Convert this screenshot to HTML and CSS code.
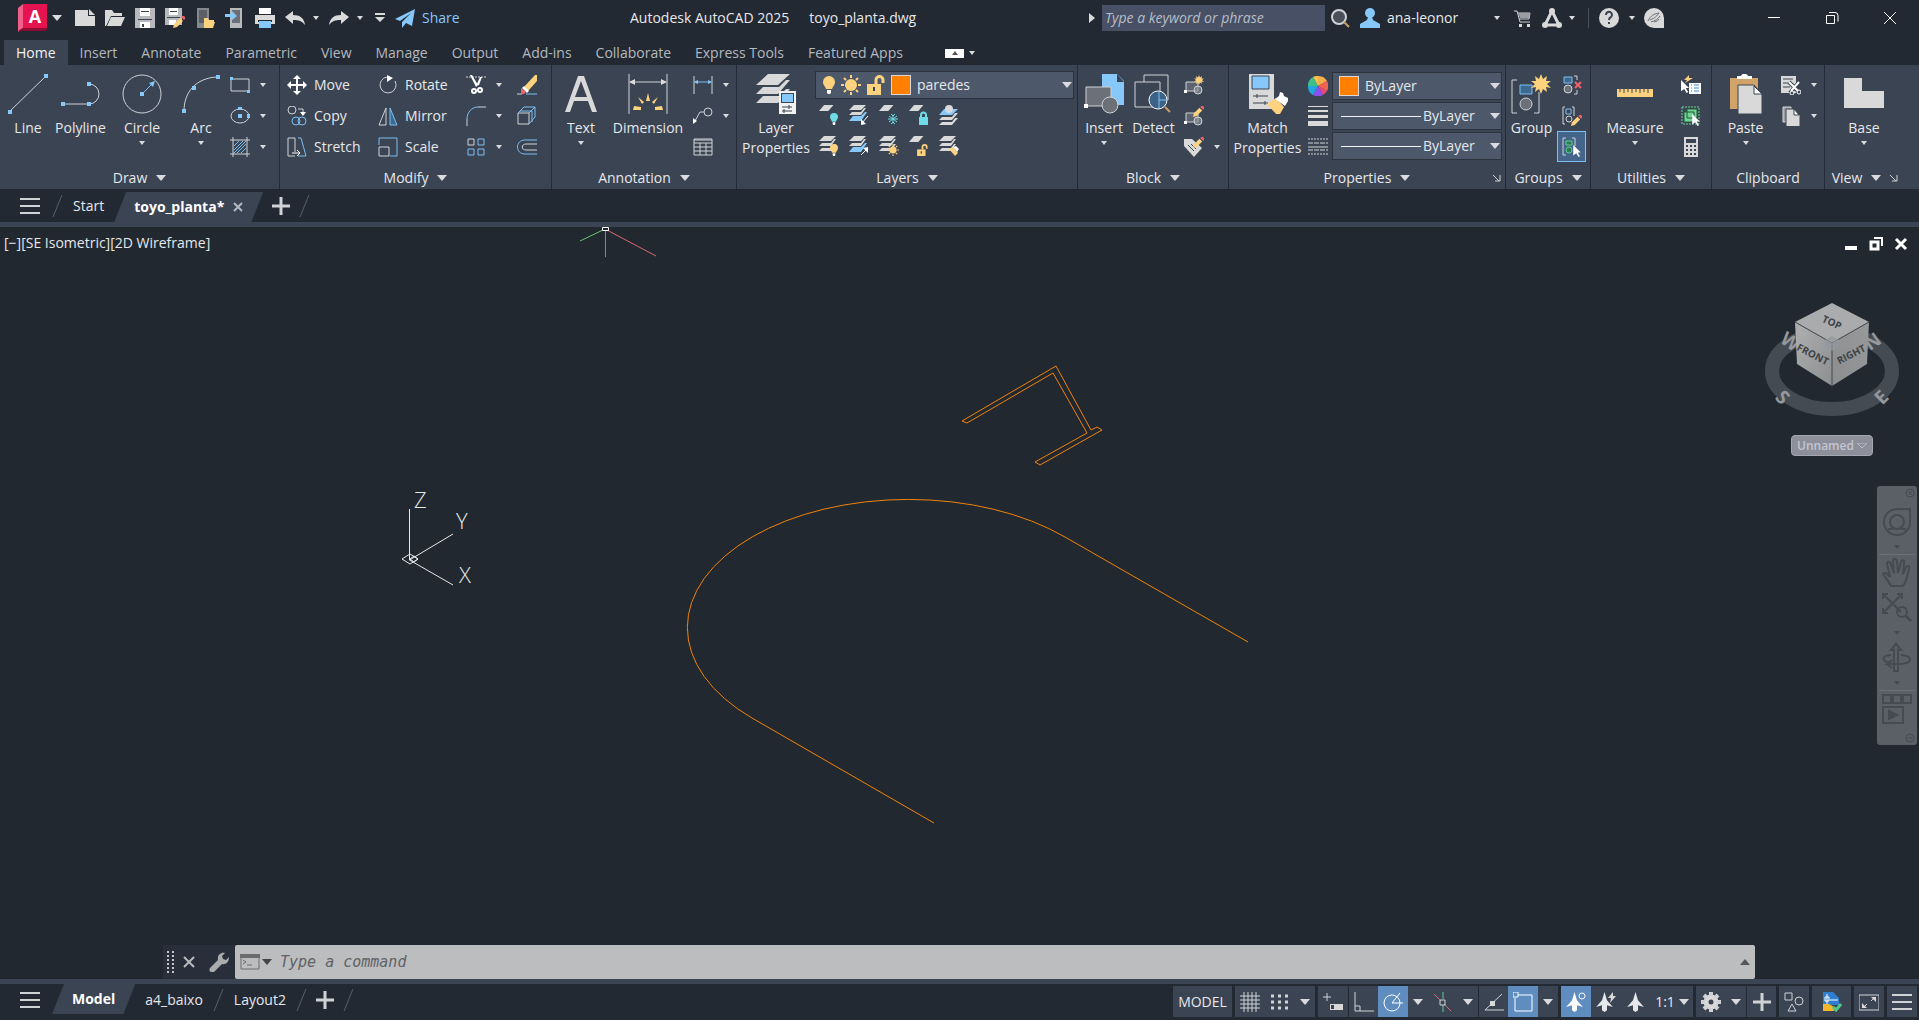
FILE: index.html
```html
<!doctype html>
<html lang="en">
    <head>
        <meta charset="utf-8">
        <title>Autodesk AutoCAD 2025 - toyo_planta.dwg</title>
        <meta name="viewport" content="width=device-width, initial-scale=1">
        <link rel="stylesheet" href="styles.css">
    </head>
    <body>
        <!-- Shapes shared by several icons -->
        <svg class="sprite" aria-hidden="true">
            <symbol id="sheet" viewBox="0 0 20 20"><path class="fg" d="M6 0h11l-6 7H0z"/></symbol>
            <symbol id="stack" viewBox="0 0 20 20"><path class="fg" d="M5 0h12l-5 5H0zM0 10l3-3h9l3-4h2l-5 7zM0 15l3-3h9l3-4h2l-5 7z"/></symbol>
            <symbol id="stack-blue" viewBox="0 0 20 20"><path class="fg" d="M5 0h12l-5 5H0zM0 10l3-3h9l3-4h2l-5 7z"/><path class="fb" d="M0 16l4-5h8l4-4h2l-6 9z"/></symbol>
            <symbol id="bulb" viewBox="0 0 12 18"><path fill="currentColor" d="M6 0a6 6 0 0 1 6 6c0 3-2 4-3 7H3C2 10 0 9 0 6a6 6 0 0 1 6-6z"/><path fill="#fff" d="M4 14h4v3l-1 1H5l-1-1z"/></symbol>
            <symbol id="sun" viewBox="0 0 20 20"><circle class="fy" cx="10" cy="10" r="6"/><path class="y" stroke-width="2" d="M10 0v3M10 17v3M0 10h3M17 10h3M3 3l2 2M15 15l2 2M3 17l2-2M15 5l2-2"/></symbol>
            <symbol id="unlock" viewBox="0 0 18 20"><path fill="none" stroke="currentColor" stroke-width="3" d="M9 9V5a3 3 0 0 1 7 0v3"/><path fill="currentColor" d="M0 9h14v11H0z"/><path fill="#3b4453" d="M6 12h2v4H6z"/></symbol>
            <symbol id="pencil" viewBox="0 0 12 12"><path class="fy" d="M1 8l6-6 3 3-6 6-4 1z"/><path fill="#f0626b" d="M8 1l1-1h2l1 1v2l-1 1z"/></symbol>
            <symbol id="star" viewBox="0 0 20 20"><path class="fy" d="M10 0l2 5 4-3-1 5 5 0-4 3 4 4-5-1 1 5-4-3-2 5-2-5-4 3 1-5-5 1 4-4-4-3 5 0-1-5 4 3z"/></symbol>
            <symbol id="block" viewBox="0 0 20 20"><path class="g" fill="#5d6470" stroke-width="1" d="M2 7h12v9H2z"/><circle class="g" fill="#8b9098" fill-opacity=".7" cx="14" cy="15" r="4"/><path fill="#fff" d="M0 15h3v3H0z"/></symbol>
            <symbol id="pointer" viewBox="0 0 10 16"><path fill="#fff" d="M0 0l10 10H6l3 5-2 1-3-5-4 3z"/></symbol>
            <symbol id="menu" viewBox="0 0 20 16"><path class="g" stroke-width="2" d="M0 1h20M0 8h20M0 15h20"/></symbol>
            <symbol id="plus" viewBox="0 0 18 18"><path class="g" stroke-width="3" d="M9 0v18M0 9h18"/></symbol>
            <symbol id="launch" viewBox="0 0 8 8"><path class="g" d="M0 1l6 6M7 1v6H2"/></symbol>
            <symbol id="person" viewBox="0 0 20 24"><path fill="currentColor" d="M10 0l3 10 7 8-7-2v6l-3 2-3-2v-6l-7 2 7-8z"/></symbol>
        </svg>

        <header class="titlebar">
            <div class="quick">
                <button class="app" aria-label="Application menu">
                    <svg width="30" height="28" viewBox="0 0 30 28"><path fill="#f0608a" d="M0 4l5-4v24l-5 4z"/><path fill="#e5134f" d="M5 0h24v24H5z"/><path fill="#8e0c31" d="M5 24h24l-1 3H0z"/><text x="17" y="19" text-anchor="middle" class="logo-letter">A</text></svg>
                    <span class="caret big"></span>
                </button>
                <button aria-label="New"><svg class="i20" viewBox="0 0 20 20"><path class="fg" d="M0 2h13v6h7v10H0z"/><path class="fg" d="M14 1l6 6h-6z"/></svg></button>
                <button aria-label="Open"><svg class="i20" viewBox="0 0 20 20"><path class="fg" d="M0 18V2h7l2 3h8v3H6L1 18z"/><path class="fg" d="M6 9h14l-4 9H2z"/></svg></button>
                <button aria-label="Save"><svg class="i20" viewBox="0 0 20 20"><path fill="#b7b9bc" d="M0 0h20v20H0z"/><path fill="#fff" d="M5 0h10v8H5zM5 14h10v6H5z"/><path fill="#3b4453" d="M6 3h8v1H6zM7 16h2v3H7zM3 11h14v1H3z"/></svg></button>
                <button aria-label="Save as"><svg class="i20" viewBox="0 0 20 20"><path fill="#b7b9bc" d="M0 0h17v17H0z"/><path fill="#fff" d="M4 0h9v7H4zM4 12h7v5H4z"/><path fill="#3b4453" d="M5 3h7v1H5zM2 9h13v1H2z"/><use href="#pencil" x="8" y="8" width="12" height="12"/></svg></button>
                <button aria-label="Open from web"><svg class="i20" viewBox="0 0 20 20"><path fill="#85888c" d="M2 0h12v20H2z"/><path fill="#5c6066" d="M4 2h8v13H4z"/><path class="fy" d="M9 20V10h4l1 2h5v2h1l-2 6z"/></svg></button>
                <button aria-label="Save to web"><svg class="i20" viewBox="0 0 20 20"><path fill="#b7b9bc" d="M5 0h12v20H5z"/><path fill="#6b6f75" d="M7 2h8v13H7z"/><path class="fb" d="M0 6h6V2l6 6-6 5V9H0z"/></svg></button>
                <button aria-label="Plot"><svg class="i20" viewBox="0 0 20 20"><path fill="#fff" d="M4 0h12v6H4z"/><path class="fg" d="M0 7h20v9H0z"/><path fill="#222933" d="M3 12h14v2H3z"/><path class="fb" d="M4 13h12v7H4z"/></svg></button>
                <button class="wide" aria-label="Undo"><svg class="i20" viewBox="0 0 20 20"><path class="fg" d="M0 9l8-6v4c7 0 11 3 12 10-3-4-6-5-12-5v4z"/></svg><span class="caret"></span></button>
                <button class="wide" aria-label="Redo"><svg class="i20" viewBox="0 0 20 20"><path class="fg" d="M20 9l-8-6v4C5 7 1 10 0 17c3-4 6-5 12-5v4z"/></svg><span class="caret"></span></button>
                <button class="customize" aria-label="Customize"><svg width="12" height="10" viewBox="0 0 12 10"><path class="fg" d="M1 0h10v2H1zM1 4h10l-5 5z"/></svg></button>
                <button class="share"><svg class="i20" viewBox="0 0 20 20"><path class="fb" d="M20 1L0 11l5 2L16 5 7 14v6l4-5 6 3z"/></svg>Share</button>
            </div>
            <h1 class="doc-title"><span>Autodesk AutoCAD 2025</span><span>toyo_planta.dwg</span></h1>
            <div class="account">
                <svg width="6" height="10" viewBox="0 0 6 10"><path class="fg" d="M0 0l6 5-6 5z"/></svg>
                <input class="search" type="search" placeholder="Type a keyword or phrase" aria-label="Search">
                <button aria-label="Find"><svg class="i20" viewBox="0 0 20 20"><circle class="g" fill="#4a505a" stroke-width="2" cx="8" cy="9" r="7"/><path stroke="#c99d6a" stroke-width="2" d="M13 14l5 5"/></svg></button>
                <button class="user"><svg class="i20" viewBox="0 0 20 20"><circle class="fb" cx="10" cy="5" r="5"/><path class="fb" d="M0 20v-4l7-4 1-3h4l1 3 7 4v4z"/></svg><span>ana-leonor</span><span class="caret"></span></button>
                <button class="cart" aria-label="Store"><svg width="18" height="18" viewBox="0 0 18 18"><path class="g" d="M0 2h3l3 11h10M5 10h10l1-6H4"/><path fill="#9a9da2" d="M4 4h12l-1 5H6z"/><path class="fg" d="M5 15h3v3H5zM13 15h3v3h-3z"/></svg></button>
                <button class="apps" aria-label="Autodesk apps"><svg class="i20" viewBox="0 0 20 20"><path fill="none" stroke="#d9d9d9" stroke-width="3" d="M10 3L3 17h14z"/><circle class="fg" cx="10" cy="3" r="3"/><circle class="fg" cx="3" cy="17" r="3"/><circle class="fg" cx="17" cy="17" r="3"/></svg><span class="caret"></span></button>
                <button class="help" aria-label="Help"><svg class="i20" viewBox="0 0 20 20"><circle class="fg" cx="10" cy="10" r="10"/><path fill="none" stroke="#3b4453" stroke-width="2" d="M7 7a3 3 0 1 1 5 2c-2 1-2 2-2 3M10 14v2"/></svg><span class="caret"></span></button>
                <button aria-label="Assistant"><svg class="i20" viewBox="0 0 20 20"><path class="fg" d="M10 0a10 10 0 0 1 10 10v10H10a10 10 0 0 1 0-20z"/><path fill="none" stroke="#6b7078" stroke-width="1" d="M4 13c3-6 6-7 11-8-2 3-4 5-9 7M7 14c4-1 7-3 9-6M10 14c3-1 4-1 5-3"/></svg></button>
                <div class="window-controls">
                    <button aria-label="Minimize"><svg width="14" height="14" viewBox="0 0 14 14"><path class="w" d="M1 6.500h12"/></svg></button>
                    <button aria-label="Restore"><svg width="14" height="14" viewBox="0 0 14 14"><path class="w" d="M1.500 4.500h8v8h-8zM4 1.500h6a3 3 0 0 1 3 3v6"/></svg></button>
                    <button aria-label="Close"><svg width="14" height="14" viewBox="0 0 14 14"><path class="w" d="M1 1l12 12M13 1L1 13"/></svg></button>
                </div>
            </div>
        </header>

        <nav class="ribbon-tabs">
            <a href="#" class="active">Home</a>
            <a href="#">Insert</a>
            <a href="#">Annotate</a>
            <a href="#">Parametric</a>
            <a href="#">View</a>
            <a href="#">Manage</a>
            <a href="#">Output</a>
            <a href="#">Add-ins</a>
            <a href="#">Collaborate</a>
            <a href="#">Express Tools</a>
            <a href="#">Featured Apps</a>
            <button class="collapse" aria-label="Minimize ribbon"><svg width="19" height="9" viewBox="0 0 19 9"><path fill="#fff" d="M0 0h19v9H0z"/><path fill="#555" d="M7 6l3-4 3 4z"/></svg><span class="caret"></span></button>
        </nav>

        <main class="ribbon">
            <section class="panel draw">
                <div class="body">
                    <button class="large"><svg class="i40" viewBox="0 0 40 40"><path class="g" d="M1 38L38 2"/><path class="fb" d="M0 36h4v4H0zM36 0h4v4h-4z"/></svg>Line</button>
                    <button class="large"><svg class="i40" viewBox="0 0 40 40"><path class="g" d="M2 30h26a10 10 0 0 0 0-20"/><path class="fb" d="M0 28h4v4H0zM26 28h4v4h-4zM26 8h4v4h-4z"/></svg>Polyline</button>
                    <button class="large"><svg class="i40" viewBox="0 0 40 40"><circle class="g" cx="20" cy="20" r="19"/><path class="b" d="M20 20l10-10"/><path class="fb" d="M18 18h4v4h-4zM33 7l-2 6-4-4z"/></svg>Circle<span class="caret"></span></button>
                    <button class="large"><svg class="i40" viewBox="0 0 40 40"><path class="g" d="M3 37C3 18 15 4 36 3"/><path class="fb" d="M1 35h4v4H1zM11 12h4v4h-4zM35 1h4v4h-4z"/></svg>Arc<span class="caret"></span></button>
                    <div class="column">
                        <button class="tool" aria-label="Rectangle"><svg class="i20" viewBox="0 0 20 20"><path class="g" d="M1 4h18v12H1z"/><path class="fb" d="M0 2h3v3H0zM17 15h3v3h-3z"/></svg><span class="caret"></span></button>
                        <button class="tool" aria-label="Ellipse"><svg class="i20" viewBox="0 0 20 20"><ellipse class="g" cx="10" cy="10" rx="9" ry="7"/><path class="fb" d="M8 1h4v3H8zM8 8h4v4H8zM17 8h3v4h-3z"/></svg><span class="caret"></span></button>
                        <button class="tool" aria-label="Hatch"><svg class="i20" viewBox="0 0 20 20"><path class="g" d="M3 0v20M17 0v20M0 3h20M0 17h20"/><path class="b" d="M4 9l5-5M4 13l9-9M4 16L16 4M7 16l9-9M11 16l5-5"/></svg><span class="caret"></span></button>
                    </div>
                </div>
                <h2>Draw<span class="caret big"></span></h2>
            </section>

            <section class="panel modify">
                <div class="body">
                    <div class="column">
                        <button class="tool"><svg class="i20" viewBox="0 0 20 20"><path fill="#fff" d="M10 0l4 4h-3v5h5V6l4 4-4 4v-3h-5v5h3l-4 4-4-4h3v-5H4v3l-4-4 4-4v3h5V4H6z"/></svg>Move</button>
                        <button class="tool"><svg class="i20" viewBox="0 0 20 20"><circle class="g" cx="5" cy="4" r="4"/><path class="g" d="M11 3h5v5"/><path fill="#fff" d="M13 6h6l-3 4z"/><circle class="b" cx="9" cy="15" r="4"/><circle class="b" cx="15" cy="15" r="4"/></svg>Copy</button>
                        <button class="tool"><svg class="i20" viewBox="0 0 20 20"><path class="g" d="M8 19H1V1h7v14"/><path class="b" d="M11 1h3l5 18h-8"/><path class="w" d="M5 16h7M10 13l3 3-3 3"/></svg>Stretch</button>
                    </div>
                    <div class="column">
                        <button class="tool"><svg class="i20" viewBox="0 0 20 20"><path class="g" d="M9 2a8 8 0 1 0 8 4"/><path fill="#fff" d="M9 0l6 3-6 4z"/></svg>Rotate</button>
                        <button class="tool"><svg class="i20" viewBox="0 0 20 20"><path class="g" d="M8 2v17H1z"/><path class="b" fill="#3d6b90" d="M12 2v17h7z"/></svg>Mirror</button>
                        <button class="tool"><svg class="i20" viewBox="0 0 20 20"><path class="b" d="M1 8V1h18v18h-7"/><path class="g" d="M1 10h10v9H1z"/></svg>Scale</button>
                    </div>
                    <div class="column">
                        <button class="tool" aria-label="Trim"><svg class="i20" viewBox="0 0 20 20"><path class="g" stroke-dasharray="2 1" d="M0 2h20"/><path fill="#fff" d="M4 0h2l6 10-2 2zM14 2h2l-3 8-3 1z"/><circle class="w" stroke-width="2" cx="8" cy="16" r="2"/><circle class="w" stroke-width="2" cx="14" cy="15" r="2"/></svg><span class="caret"></span></button>
                        <button class="tool" aria-label="Fillet"><svg class="i20" viewBox="0 0 20 20"><path class="g" d="M1 20v-7M12 1h8"/><path class="b" d="M1 13C1 6 6 1 12 1"/></svg><span class="caret"></span></button>
                        <button class="tool" aria-label="Array"><svg class="i20" viewBox="0 0 20 20"><path class="g" d="M2 2h6v6H2z"/><path class="b" d="M12 2h6v6h-6zM2 12h6v6H2zM12 12h6v6h-6z"/></svg><span class="caret"></span></button>
                    </div>
                    <div class="column">
                        <button class="tool" aria-label="Erase"><svg class="i20" viewBox="0 0 20 20"><path class="fy" d="M20 0v6l-9 10-4-4L18 0z"/><path fill="#fff" d="M7 11l5 5-2 2-5-5z"/><path fill="#f0626b" d="M4 13l5 4-2 2H5l-1-2z"/><path class="g" d="M0 19h5"/><path class="b" d="M9 19h11"/></svg></button>
                        <button class="tool" aria-label="Explode"><svg class="i20" viewBox="0 0 20 20"><path class="g" d="M1 7h11v11H1z"/><path class="b" d="M1 7l6-6h11v10l-6 7M12 7l6-6M3 5h12v11"/></svg></button>
                        <button class="tool" aria-label="Offset"><svg class="i20" viewBox="0 0 20 20"><path class="b" d="M20 3H8C-2 3-2 17 8 17h12"/><path class="g" d="M20 7H9c-5 0-5 6 0 6h11"/></svg></button>
                    </div>
                </div>
                <h2>Modify<span class="caret big"></span></h2>
            </section>

            <section class="panel annotation">
                <div class="body">
                    <button class="large"><svg class="i40" viewBox="0 0 40 40"><path class="fg" d="M17 2h6l13 36h-5l-4-11H13L9 38H4zM20 7l-6 16h12z"/></svg>Text<span class="caret"></span></button>
                    <button class="large"><svg class="i40" viewBox="0 0 40 40"><path class="g" d="M1 0v40M39 0v40M2 8h36"/><path class="fg" d="M1 8l6-3v6zM39 8l-6-3v6z"/><path class="fy" d="M18 27l2-8 2 8zM10 23l6 5-2 2zM30 23l-6 5 2 2zM6 32l7 1v3H5zM34 32l-7 1v3h8z"/></svg>Dimension</button>
                    <div class="column">
                        <button class="tool" aria-label="Linear"><svg class="i20" viewBox="0 0 20 20"><path class="g" d="M1 1v18M19 1v18"/><path class="b" d="M2 7h16"/><path class="fb" d="M1 7l4-2v4zM19 7l-4-2v4z"/></svg><span class="caret"></span></button>
                        <button class="tool" aria-label="Leader"><svg class="i20" viewBox="0 0 20 20"><circle class="g" cx="15" cy="6" r="4"/><path class="g" d="M11 6H7L2 15"/><path fill="#fff" d="M0 18v-6l4 3z"/></svg><span class="caret"></span></button>
                        <button class="tool" aria-label="Table"><svg class="i20" viewBox="0 0 20 20"><path class="g" d="M1 2h18v16H1zM1 6h18M1 10h18M1 14h18M7 6v12M13 6v12M1 3h18"/></svg></button>
                    </div>
                </div>
                <h2>Annotation<span class="caret big"></span></h2>
            </section>

            <section class="panel layers">
                <div class="body">
                    <button class="large"><svg class="i40" viewBox="0 0 40 40"><path class="fg" d="M12 0h22L22 11H0zM0 20l7-7h16l7-7h4L22 20zM0 29l7-7h16l7-7h4L22 29z"/><path fill="#f2f2f2" d="M23 17h17v23H23z"/><path fill="#3b4453" d="M25 19h13v10H25z"/><path class="fb" d="M26 20h11v8H26z"/><path stroke="#3b4453" d="M26 33h10M26 37h10M33 31v4M28 35v4"/></svg>Layer<br>Properties</button>
                    <div class="layer-side">
                        <div class="combo">
                            <svg class="yellow" width="12" height="18"><use href="#bulb"/></svg>
                            <svg class="i20"><use href="#sun"/></svg>
                            <svg class="yellow" width="18" height="20"><use href="#unlock"/></svg>
                            <span class="swatch"></span>
                            <select aria-label="Layer"><option>paredes</option></select>
                            <span class="caret big"></span>
                        </div>
                        <div class="layer-tools">
                            <button aria-label="Layer off"><svg class="i20"><use href="#sheet" width="17" height="17"/><svg class="cyan" x="11" y="8" width="8" height="12"><use href="#bulb"/></svg></svg></button>
                            <button aria-label="Isolate"><svg class="i20"><use href="#stack-blue"/><path class="w" d="M19 11l-6 7"/><path fill="#fff" d="M12 20v-6l5 5z"/></svg></button>
                            <button aria-label="Freeze"><svg class="i20"><use href="#sheet" width="17" height="17"/><path stroke="#6fdbe6" d="M14 9v10M10 11l8 6M18 11l-8 6M9 14h10M12 9l2 2 2-2M12 19l2-2 2 2"/></svg></button>
                            <button aria-label="Lock"><svg class="i20"><use href="#sheet" width="17" height="17"/><path fill="none" stroke="#6fdbe6" stroke-width="2" d="M12 12v-2a2 2 0 0 1 5 0v2"/><path fill="#6fdbe6" d="M10 12h9v8h-9z"/></svg></button>
                            <button aria-label="Make current"><svg class="i20"><path class="fb" d="M5 4h14l-6 6H0z"/><circle class="fg" cx="10" cy="4" r="4"/><path class="fg" d="M0 15l3-3h10l3-4h3l-6 7zM0 20l3-3h10l3-4h3l-6 7z"/></svg></button>
                            <button aria-label="Layers on"><svg class="i20"><use href="#stack"/><svg class="yellow" x="11" y="8" width="8" height="12"><use href="#bulb"/></svg></svg></button>
                            <button aria-label="Unisolate"><svg class="i20"><use href="#stack-blue"/><path class="w" d="M12 19l6-6"/><path fill="#fff" d="M19 11v6l-5-5z"/></svg></button>
                            <button aria-label="Thaw"><svg class="i20"><use href="#stack"/><use href="#sun" x="8" y="8" width="12" height="12"/></svg></button>
                            <button aria-label="Unlock"><svg class="i20"><use href="#sheet" width="17" height="17"/><svg class="yellow" x="8" y="8" width="11" height="12"><use href="#unlock"/></svg></svg></button>
                            <button aria-label="Match layer"><svg class="i20"><use href="#stack"/><path class="fy" d="M10 13l4-2 5 6-3 3z"/><path fill="#fff" d="M14 11l3-1 3 3-2 3z"/></svg></button>
                        </div>
                    </div>
                </div>
                <h2>Layers<span class="caret big"></span></h2>
            </section>

            <section class="panel block">
                <div class="body">
                    <button class="large"><svg class="i40" viewBox="0 0 40 40"><path class="fb" d="M18 0h15l7 7v24H18z"/><path fill="#3b4453" d="M33 0v8h7z"/><path class="g" fill="#6c7078" d="M2 13h25v19H2z"/><path fill="#fff" d="M0 30h4v4H0z"/><circle class="g" fill="#6c7078" cx="26" cy="31" r="8"/></svg>Insert<span class="caret"></span></button>
                    <button class="large"><svg class="i40" viewBox="0 0 40 40"><path class="g" d="M2 8h25v25H2zM11 8V1h24v25"/><circle class="w" fill="#3c6387" cx="25" cy="26" r="9"/><path class="b" d="M26 17v17M26 26h8"/><path stroke="#c99d6a" stroke-width="2" d="M32 33l5 5"/></svg>Detect</button>
                    <div class="column">
                        <button class="tool" aria-label="Create block"><svg class="i20"><use href="#block"/><use href="#star" x="10" y="0" width="10" height="10"/></svg></button>
                        <button class="tool" aria-label="Edit block"><svg class="i20"><use href="#block"/><use href="#pencil" x="9" y="0" width="11" height="11"/></svg></button>
                        <button class="tool" aria-label="Edit attributes"><svg class="i20"><path class="fg" d="M0 2h8l10 9-8 9L0 9z"/><path stroke="#3b4453" d="M4 8l6 6M7 7l5 5"/><use href="#pencil" x="9" y="0" width="11" height="11"/></svg><span class="caret"></span></button>
                    </div>
                </div>
                <h2>Block<span class="caret big"></span></h2>
            </section>

            <section class="panel properties">
                <div class="body">
                    <button class="large"><svg class="i40" viewBox="0 0 40 40"><path class="fg" d="M1 0h25v35H1z"/><path class="fb" stroke="#3b4453" d="M4 2h17v13H4z"/><path stroke="#3b4453" d="M5 22h15M5 29h15M9 20v4M17 27v4"/><path class="fy" d="M19 30l9-6 8 9-4 7h-4z"/><path fill="#fff" d="M27 25l4-3 1-4 3 1 1 3 4 2v3l-3 5z"/></svg>Match<br>Properties</button>
                    <div class="property-list">
                        <svg class="i20" viewBox="-10 -10 20 20"><path fill="#f5c344" d="M0 0L-5-9A10 10 0 0 1 0-10z"/><path fill="#f6ae4c" d="M0 0V-10A10 10 0 0 1 9-5z"/><path fill="#ef6350" d="M0 0L9-5A10 10 0 0 1 9 5z"/><path fill="#e8477a" d="M0 0L9 5A10 10 0 0 1 5 9z"/><path fill="#8d4ff0" d="M0 0L5 9A10 10 0 0 1-5 9z"/><path fill="#22a7e0" d="M0 0L-5 9A10 10 0 0 1-10 0z"/><path fill="#3fc08b" d="M0 0L-10 0A10 10 0 0 1-5-9z"/></svg>
                        <div class="combo"><span class="swatch"></span><select aria-label="Color"><option>ByLayer</option></select><span class="caret big"></span></div>
                        <svg class="i20" viewBox="0 0 20 20"><path class="fg" d="M0 0h20v1H0zM0 4h20v2H0zM0 9h20v3H0zM0 15h20v5H0z"/></svg>
                        <div class="combo"><span class="sample"></span><select class="linetype" aria-label="Lineweight"><option>ByLayer</option></select><span class="caret big"></span></div>
                        <svg class="i20" viewBox="0 0 20 20"><path class="g" stroke-dasharray="2 1" d="M0 3h20M0 18h20"/><path class="g" stroke-dasharray="5 1" d="M0 7h20M0 14h20"/><path class="g" d="M0 11h20"/></svg>
                        <div class="combo"><span class="sample"></span><select class="linetype" aria-label="Linetype"><option>ByLayer</option></select><span class="caret big"></span></div>
                    </div>
                </div>
                <h2>Properties<span class="caret big"></span><svg class="launcher"><use href="#launch"/></svg></h2>
            </section>

            <section class="panel groups">
                <div class="body">
                    <button class="large"><svg class="i40" viewBox="0 0 40 40"><path class="g" d="M6 6H1v33h5M23 39h5V18"/><path class="b" fill="#3d6b90" d="M9 11h12v9H9z"/><circle class="g" fill="#6c7078" cx="15" cy="30" r="6"/><use href="#star" x="20" y="0" width="20" height="20"/></svg>Group</button>
                    <div class="column">
                        <button class="tool" aria-label="Ungroup"><svg class="i20" viewBox="0 0 20 20"><path class="b" fill="#3d6b90" d="M2 2h8v6H2z"/><circle class="g" fill="#6c7078" cx="6" cy="14" r="4"/><path class="g" d="M12 1h3v4M15 15v4h-3"/><path stroke="#f0626b" stroke-width="2" d="M13 7l6 6M19 7l-6 6"/></svg></button>
                        <button class="tool" aria-label="Group edit"><svg class="i20" viewBox="0 0 20 20"><path class="g" d="M3 1H1v17h2M10 1h2v9"/><path class="b" d="M4 3h5v5H4z"/><circle class="g" cx="7" cy="13" r="3"/><use href="#pencil" x="9" y="9" width="11" height="11"/></svg></button>
                        <button class="tool selected" aria-label="Group selection"><svg class="i20" viewBox="0 0 20 20"><path class="g" d="M4 1H1v17h3M10 1h3v8"/><path fill="#2d7a57" stroke="#5fcf8f" d="M4 4h6v4H4z"/><circle fill="#2d7a57" stroke="#5fcf8f" cx="7" cy="13" r="3"/><use href="#pointer" x="11" y="8" width="8" height="12"/></svg></button>
                    </div>
                </div>
                <h2>Groups<span class="caret big"></span></h2>
            </section>

            <section class="panel utilities">
                <div class="body">
                    <button class="large"><svg class="i40" viewBox="0 0 40 40"><path class="fy" d="M2 15h36v8H2z"/><path stroke="#3b4453" d="M5 15v3M9 15v4M13 15v3M17 15v4M21 15v3M25 15v4M29 15v3M33 15v4"/></svg>Measure<span class="caret"></span></button>
                    <div class="column">
                        <button class="tool" aria-label="Quick select"><svg class="i20" viewBox="0 0 20 20"><path class="fy" d="M8 0L3 5h3L4 8l8-5H8z"/><path fill="#fff" d="M8 8h12v11H8z"/><path stroke="#2f87d6" d="M10 10h1M13 10h5M10 13h1M13 13h5M10 16h1M13 16h5" stroke-width="1"/><use href="#pointer" x="0" y="5" width="8" height="13"/></svg></button>
                        <button class="tool" aria-label="Select all"><svg class="i20" viewBox="0 0 20 20"><path fill="none" stroke="#6fd394" stroke-dasharray="2 1" d="M1 1h17v17H1z"/><path fill="#6fd394" stroke="#26593c" d="M3 6h10v10H3zM6 3h10v9H6z"/><use href="#pointer" x="11" y="8" width="8" height="12"/></svg></button>
                        <button class="tool" aria-label="Calculator"><svg class="i20" viewBox="0 0 20 20"><path class="fg" d="M3 0h14v20H3z"/><path fill="#3b4453" d="M5 2h10v4H5zM5 8h2v2H5zM9 8h2v2H9zM13 8h2v2h-2zM5 12h2v2H5zM9 12h2v2H9zM13 12h2v2h-2zM5 16h2v2H5zM9 16h2v2H9zM13 16h2v2h-2z"/></svg></button>
                    </div>
                </div>
                <h2>Utilities<span class="caret big"></span></h2>
            </section>

            <section class="panel clipboard">
                <div class="body">
                    <button class="large"><svg class="i40" viewBox="0 0 40 40"><path fill="#d1a369" d="M4 4h28v31H4z"/><path fill="#fff" d="M11 5V2h4c1-3 6-3 7 0h4v3z"/><path class="fg" stroke="#3b4453" d="M12 11h16l8 9v20H12z"/><path fill="#fff" stroke="#3b4453" d="M28 12v8h8z"/></svg>Paste<span class="caret"></span></button>
                    <div class="column">
                        <button class="tool" aria-label="Cut"><svg class="i20" viewBox="0 0 20 20"><path class="fg" d="M0 1h15v17H0z"/><path stroke="#3b4453" d="M2 4h10M2 8h8M2 12h7"/><path stroke="#3b4453" stroke-width="4" d="M8 7l10 10M18 7L9 18"/><path class="w" stroke-width="2" d="M8 7l9 9M18 7l-8 9"/><circle class="w" cx="11" cy="18" r="2"/><circle class="w" cx="18" cy="17" r="2"/></svg><span class="caret"></span></button>
                        <button class="tool" aria-label="Copy clip"><svg class="i20" viewBox="0 0 20 20"><path fill="#9a9da2" stroke="#d9d9d9" d="M2 1h8v15H2z"/><path class="fg" stroke="#3b4453" d="M5 3h8l6 6v12H5z"/><path fill="#fff" stroke="#3b4453" d="M13 3v6h5z"/></svg><span class="caret"></span></button>
                    </div>
                </div>
                <h2>Clipboard</h2>
            </section>

            <section class="panel view">
                <div class="body">
                    <button class="large"><svg class="i40" viewBox="0 0 40 40"><path class="fg" d="M0 4h18v13h22v17H0z"/></svg>Base<span class="caret"></span></button>
                </div>
                <h2>View<span class="caret big"></span><svg width="8" height="8"><use href="#launch"/></svg></h2>
            </section>
        </main>

        <nav class="tabs files">
            <button class="menu" aria-label="Files menu"><svg width="20" height="16"><use href="#menu"/></svg></button>
            <span class="slash"></span>
            <a href="#">Start</a>
            <a href="#" class="active">toyo_planta*<svg width="10" height="10" viewBox="0 0 10 10"><path stroke="#b3b8bf" stroke-width="2" d="M1 1l8 8M9 1L1 9"/></svg></a>
            <button class="add" aria-label="New drawing"><svg width="18" height="18"><use href="#plus"/></svg></button>
            <span class="slash"></span>
        </nav>

        <div class="canvas">
            <svg class="drawing" aria-label="Drawing">
                <path class="entity" d="M1248 415L1065 310A221 128 0 0 0 752 491L934 596"/>
                <path class="entity" d="M962 194L1056 139L1091 203L1097 200L1102 203L1040 238L1035 235L1087 206L1053 146L967 196z"/>
                <g class="ucs">
                    <path d="M409.500 282V333L453 307M409.500 333L453 358M402 332l8-5 8 5-8 5zM410 332l4-3 4 3-4 3z"/>
                    <text x="414" y="281">Z</text>
                    <text x="456" y="302">Y</text>
                    <text x="459" y="356">X</text>
                </g>
                <path fill="none" stroke="#63c96b" d="M605 2L580 14"/>
                <path fill="none" stroke="#d56a70" d="M605 2L656 29"/>
                <path fill="none" stroke="#7b78dd" stroke-width="1" d="M605.500 4v26"/>
                <path fill="#212830" stroke="#fff" d="M602.500 .500h6v3h-6z"/>
            </svg>

            <div class="viewport-label">[−][SE Isometric][2D Wireframe]</div>

            <div class="viewport-controls">
                <button aria-label="Minimize viewport"><svg width="14" height="14" viewBox="0 0 14 14"><path fill="#fff" d="M1 9h12v4H1z"/></svg></button>
                <button aria-label="Restore viewport"><svg width="14" height="14" viewBox="0 0 14 14"><path fill="none" stroke="#fff" stroke-width="2" d="M5 1h8v8"/><path fill="none" stroke="#fff" stroke-width="3" d="M2 5h7v7H2z"/></svg></button>
                <button aria-label="Close viewport"><svg width="14" height="14" viewBox="0 0 14 14"><path stroke="#fff" stroke-width="3" d="M2 2l10 10M12 2L2 12"/></svg></button>
            </div>

            <div class="viewcube">
                <svg width="138" height="120" viewBox="0 0 138 120">
                    <defs>
                        <linearGradient id="front" x1="0" y1="0" x2="1" y2="1"><stop offset="0" stop-color="#aeb0b1"/><stop offset="1" stop-color="#8c8e90"/></linearGradient>
                        <linearGradient id="right" x1="1" y1="0" x2="0" y2="1"><stop offset="0" stop-color="#97999b"/><stop offset="1" stop-color="#8b8d8f"/></linearGradient>
                    </defs>
                    <ellipse cx="69" cy="71" rx="60" ry="38" fill="none" stroke="#454b53" stroke-width="14"/>
                    <text class="compass" transform="translate(27 42) rotate(35)" text-anchor="middle" y="6">W</text>
                    <text class="compass" transform="translate(110 42) rotate(-35)" text-anchor="middle" y="6">N</text>
                    <text class="compass" transform="translate(20 97) rotate(45)" text-anchor="middle" y="7">S</text>
                    <text class="compass" transform="translate(118 97) rotate(-45)" text-anchor="middle" y="7">E</text>
                    <path fill="#a9abad" d="M69 3L32 22l37 21 37-21z"/>
                    <path fill="url(#front)" d="M32 22l37 21v43L34 64z"/>
                    <path fill="url(#right)" d="M106 22L69 43v43l35-22z"/>
                    <path fill="none" stroke="#44484c" d="M32 22l37 21 37-21M69 43v43"/>
                    <path fill="#93989f" d="M69 36l7 4v7l-7 4-7-4v-7z" opacity=".7"/>
                    <text class="face" transform="translate(69 22) rotate(25)" text-anchor="middle" y="4">TOP</text>
                    <text class="face" transform="translate(50 54) rotate(27)" text-anchor="middle" y="4">FRONT</text>
                    <text class="face" transform="translate(88 54) rotate(-27)" text-anchor="middle" y="4">RIGHT</text>
                </svg>
                <label class="ucs-select"><select aria-label="Coordinate system"><option>Unnamed</option></select><svg width="10" height="6" viewBox="0 0 10 6"><path fill="none" stroke="#b9bbc6" d="M0 0h10L5 5z"/></svg></label>
            </div>

            <div class="navbar">
                <svg class="corner" width="10" height="10" viewBox="0 0 10 10"><circle cx="5" cy="5" r="4"/><path d="M3 3l4 4M7 3L3 7"/></svg>
                <button class="wheel" aria-label="Wheel"><svg width="28" height="28" viewBox="0 0 28 28"><path d="M14 1h13v13A13 13 0 1 1 14 1z"/><circle cx="14" cy="14" r="7"/><path d="M5 21h4l2-2M23 21h-4l-2-2"/></svg></button>
                <span class="caret"></span>
                <button class="ruled" aria-label="Pan"><svg width="30" height="30" viewBox="0 0 30 30"><path d="M9 28C6 22 3 19 1 16c2-2 4-1 7 3L5 6c0-3 3-3 4 0l3 9-1-12c0-3 3-3 4 0l1 12 3-11c1-3 4-2 3 1l-1 11 3-7c2-2 4-1 3 2-2 6-2 12-6 17z"/></svg></button>
                <button aria-label="Zoom"><svg width="30" height="30" viewBox="0 0 30 30"><path d="M1 1l18 18M20 1L1 20M1 6V1h5M15 1h5v5M1 15v5h5"/><circle cx="20" cy="19" r="5"/><path stroke-width="3" d="M24 23l5 5"/></svg></button>
                <span class="caret"></span>
                <button aria-label="Orbit"><svg width="30" height="30" viewBox="0 0 30 30"><path d="M12 28V7H9l5-6 5 6h-3v21zM9 20C-1 18-1 13 9 12M19 12c12 1 12 8 0 9H5l5-4M5 21l5 4"/></svg></button>
                <span class="caret"></span>
                <button class="ruled" aria-label="Show motion"><svg width="30" height="30" viewBox="0 0 30 30"><path d="M1 1h8v8H1zM11 1h8v8h-8zM21 1h8v8h-8zM1 13h20v16H1z"/><path class="solid" d="M7 17l8 4-8 4z"/></svg></button>
                <svg class="corner" width="10" height="10" viewBox="0 0 10 10"><circle cx="5" cy="5" r="4"/><path d="M3 5h4"/></svg>
            </div>

            <div class="command">
                <div class="command-grip">
                    <svg width="7" height="22" viewBox="0 0 7 22"><path stroke="#c4c6c8" stroke-width="2" stroke-dasharray="2 2" d="M1 0v22M6 0v22"/></svg>
                    <button aria-label="Close command line"><svg width="12" height="12" viewBox="0 0 12 12"><path stroke="#b9bbbd" stroke-width="2" d="M1 1l10 10M11 1L1 11"/></svg></button>
                    <button class="wrench" aria-label="Customize command line"><svg class="i20" viewBox="0 0 20 20"><path fill="#a9abad" d="M1 16l8-8c-1-4 2-8 7-7l-3 3 1 3 3 1 3-3c0 5-3 8-7 7l-8 8c-2 2-6-1-4-4z"/></svg></button>
                </div>
                <div class="command-input">
                    <svg class="i20" viewBox="0 0 20 20"><path fill="none" stroke="#6a6c6e" d="M1 3h18v14H1z"/><path fill="#6a6c6e" d="M0 2h20v4H0z"/><path fill="none" stroke="#6a6c6e" d="M3 8l3 2-3 2M7 13h5"/></svg>
                    <span class="caret big"></span>
                    <input type="text" placeholder="Type a command" aria-label="Command">
                    <svg width="10" height="6" viewBox="0 0 10 6"><path fill="#555" d="M0 6l5-6 5 6z"/></svg>
                </div>
            </div>
        </div>

        <footer class="bottom">
            <nav class="tabs layouts">
                <button class="menu" aria-label="Layouts menu"><svg width="20" height="16"><use href="#menu"/></svg></button>
                <a href="#" class="active">Model</a>
                <a href="#">a4_baixo</a>
                <span class="slash"></span>
                <a href="#">Layout2</a>
                <span class="slash"></span>
                <button class="add" aria-label="New layout"><svg width="18" height="18"><use href="#plus"/></svg></button>
                <span class="slash"></span>
            </nav>
            <div class="status">
                <button class="space">MODEL</button>
                <div class="set">
                    <button aria-label="Grid"><svg class="i20" viewBox="0 0 20 20"><path class="g" d="M4 0v20M8 0v20M12 0v20M16 0v20M0 4h20M0 8h20M0 12h20M0 16h20"/></svg></button>
                    <button aria-label="Snap"><svg class="i20" viewBox="0 0 20 20"><path class="g" stroke-width="3" stroke-dasharray="3 4" d="M1 4h17M1 10h17M1 16h17"/></svg></button>
                    <button class="drop" aria-label="Snap options"><span class="caret big"></span></button>
                </div>
                <div class="set">
                    <button aria-label="Dynamic input"><svg class="i20" viewBox="0 0 20 20"><path class="g" d="M4 1v8M0 5h8"/><path class="fg" d="M7 12h13v6H7z"/><path fill="#3b4453" d="M8 13h3v4H8z"/></svg></button>
                    <button class="ruled" aria-label="Ortho"><svg class="i20" viewBox="0 0 20 20"><path class="g" d="M1 0v19h19M1 14h5v5"/></svg></button>
                    <button class="on" aria-label="Polar"><svg class="i20" viewBox="0 0 20 20"><circle class="w" cx="9" cy="11" r="8"/><path class="w" d="M9 11h11M9 11L17 1"/></svg></button>
                    <button class="drop" aria-label="Polar options"><span class="caret big"></span></button>
                    <button aria-label="Isodraft"><svg class="i20" viewBox="0 0 20 20"><path stroke="#d56a70" d="M1 2l7 7M11 12l7 7"/><path stroke="#63c99b" d="M10 0v7M10 13v7"/><path class="g" d="M7 8h5v5H7z"/></svg></button>
                    <button class="drop" aria-label="Isodraft options"><span class="caret big"></span></button>
                    <button class="ruled" aria-label="Object snap tracking"><svg class="i20" viewBox="0 0 20 20"><path class="g" d="M18 2L1 18h19"/><path class="fg" d="M6 9h5v5H6z"/></svg></button>
                    <button class="on" aria-label="Object snap"><svg class="i20" viewBox="0 0 20 20"><path class="w" d="M5 3h14v16H2V6"/><path class="w" d="M0 0h5v5H0z"/></svg></button>
                    <button class="drop" aria-label="Object snap options"><span class="caret big"></span></button>
                </div>
                <div class="set">
                    <button class="on" aria-label="Annotation visibility"><svg class="i20"><use href="#person" x="0" y="0" width="17" height="20"/><circle class="w" cx="16" cy="4" r="3"/></svg></button>
                    <button aria-label="Auto scale"><svg class="i20"><use href="#person" x="0" y="0" width="17" height="20"/><path class="fg" d="M17 0l-5 6h3l-1 5 6-7h-3z"/></svg></button>
                    <button aria-label="Annotation scale"><svg class="i20"><use href="#person" x="1" y="0" width="17" height="20"/></svg></button>
                    <button class="scale">1:1<span class="caret big"></span></button>
                </div>
                <div class="set">
                    <button aria-label="Workspace"><svg class="i20" viewBox="0 0 20 20"><circle cx="10" cy="10" r="5" fill="none" stroke="#d9d9d9" stroke-width="5"/><path class="g" stroke-width="4" d="M10 0v4M10 16v4M0 10h4M16 10h4M3 3l3 3M14 14l3 3M3 17l3-3M14 6l3-3"/></svg></button>
                    <button class="drop" aria-label="Workspace options"><span class="caret big"></span></button>
                    <button class="ruled" aria-label="Monitor"><svg width="18" height="18"><use href="#plus"/></svg></button>
                </div>
                <div class="set"><button aria-label="Isolate objects"><svg class="i20" viewBox="0 0 20 20"><path class="g" d="M1 1h7v7H1zM8 12l-4 7h8z"/><circle class="g" cx="15" cy="9" r="4"/></svg></button></div>
                <div class="set"><button class="graphics" aria-label="Graphics"><svg class="i20" viewBox="0 0 20 20"><path fill="#2f7ed0" d="M1 0h10l6 6v7H1z"/><path class="w" d="M5 2v10M8 8h8M3 5h4v4H3z"/><path fill="#f3b62d" d="M1 12h6l5 3v4H1z"/><path fill="none" stroke="#55c785" stroke-width="3" d="M11 15l3 3 5-6"/></svg></button></div>
                <div class="set"><button aria-label="Clean screen"><svg class="i20" viewBox="0 0 20 20"><path class="g" d="M0 3h20v15H0zM12 9l4-4M8 12l-4 4"/><path class="fg" d="M12 5h5v5zM3 11v5h5z"/></svg></button></div>
                <div class="set"><button aria-label="Customization"><svg width="20" height="16"><use href="#menu"/></svg></button></div>
            </div>
        </footer>
    </body>
</html>
```
FILE: styles.css
```css
* {
    box-sizing: border-box;
}

body {
    margin: 0;
    height: 100vh;
    display: flex;
    flex-direction: column;
    overflow: hidden;
    background-color: #222933;
    color: #e6e8eb;
    font-family: "Open Sans", "Noto Sans", sans-serif;
    font-size: 14px;
    line-height: 20px;
}

button,
input,
select {
    margin: 0;
    padding: 0;
    border: 0;
    background: none;
    color: inherit;
    font: inherit;
    appearance: none;
}

button {
    display: flex;
    align-items: center;
    justify-content: center;
    flex: none;
}

a {
    color: inherit;
    text-decoration: none;
}

h1,
h2 {
    margin: 0;
    font-size: 14px;
    font-weight: normal;
}

svg {
    flex: none;
    display: block;
}

.sprite {
    position: absolute;
    width: 0;
    height: 0;
}

.i20 {
    width: 20px;
    height: 20px;
}

.i40 {
    width: 40px;
    height: 40px;
}

/* Icon paints */
.g { stroke: #d0d3d6; }
.b { stroke: #7cc0f5; }
.w { stroke: #fff; }
.y { stroke: #fcd27e; }
.g:not([fill]), .b:not([fill]), .w:not([fill]), .y:not([fill]) { fill: none; }
.fg { fill: #d9d9d9; }
.fb { fill: #86c8fa; }
.fy { fill: #fcd27e; }
.yellow { color: #fcd27e; }
.cyan { color: #6fdbe6; }

.caret {
    flex: none;
    border: 3px solid transparent;
    border-top: 4px solid #d9dbde;
    border-bottom: 0;
}

.caret.big {
    border-width: 5px;
    border-top-width: 6px;
    border-bottom: 0;
}

/* Title bar */
.titlebar {
    display: grid;
    grid-template-columns: 630px 1fr auto;
    align-items: center;
    height: 35px;
    flex: none;
}

.quick {
    display: flex;
    align-items: center;
    padding-left: 18px;
}

.quick button {
    width: 30px;
}

.quick .app {
    width: 52px;
    gap: 4px;
    justify-content: flex-start;
}

.quick .wide {
    width: 44px;
    gap: 8px;
    justify-content: flex-start;
    padding-left: 5px;
}

.quick .customize {
    width: 24px;
}

.quick .share {
    width: auto;
    gap: 7px;
    margin-left: 3px;
    color: #86c8fa;
}

.logo-letter {
    fill: #fff;
    font-size: 18px;
    font-weight: bold;
}

.doc-title {
    display: flex;
    gap: 20px;
    white-space: nowrap;
}

.account {
    display: flex;
    align-items: center;
}

.search {
    width: 223px;
    height: 26px;
    margin: 0 6px 0 7px;
    padding: 0 3px;
    background-color: #475064;
    font-style: italic;
}

.search::placeholder {
    color: #b8bec9;
    opacity: 1;
}

.user {
    width: 148px;
    margin-left: 9px;
    gap: 7px;
    justify-content: flex-start;
}

.user .caret {
    margin-left: auto;
    margin-right: 8px;
}

.cart {
    margin-left: 6px;
}

.apps {
    margin-left: 10px;
    gap: 7px;
}

.help {
    gap: 10px;
    margin: 0 9px 0 13px;
    padding-left: 10px;
    border-left: 1px solid #4b525e;
}

.window-controls {
    display: flex;
    margin-left: 81px;
}

.window-controls button {
    width: 58px;
    height: 34px;
}

/* Ribbon */
.ribbon-tabs {
    display: flex;
    align-items: flex-end;
    flex: none;
    height: 30px;
    padding-left: 4px;
    color: #b3b8bf;
}

.ribbon-tabs a {
    padding: 3px 12px 2px;
}

.ribbon-tabs .active {
    background-color: #3b4453;
    color: #f2f3f5;
}

.collapse {
    height: 24px;
    gap: 5px;
    margin-left: 30px;
}

.ribbon {
    display: flex;
    flex: none;
    height: 124px;
    background-color: #3b4453;
}

.panel {
    display: flex;
    flex-direction: column;
    flex: none;
    border-right: 1px solid #252b36;
}

.panel .body {
    display: grid;
    align-items: start;
    height: 101px;
    padding-top: 4px;
}

.panel h2 {
    position: relative;
    display: flex;
    align-items: center;
    justify-content: center;
    gap: 9px;
    height: 23px;
}

.draw { width: 280px; }
.modify { width: 272px; }
.annotation { width: 185px; }
.layers { width: 341px; }
.block { width: 151px; }
.properties { width: 277px; }
.groups { width: 85px; }
.utilities { width: 121px; }
.clipboard { width: 113px; }
.view { flex: 1; border-right: 0; }

.draw .body { grid-template-columns: 56px 49px 74px 44px 1fr; }
.modify .body { grid-template-columns: 91px 88px 51px 1fr; }
.annotation .body { grid-template-columns: 58px 76px 1fr; }
.layers .body { grid-template-columns: 78px 1fr; }
.block .body { grid-template-columns: 52px 47px 1fr; }
.properties .body { grid-template-columns: 77px 1fr; }
.groups .body { grid-template-columns: 51px 1fr; }
.utilities .body { grid-template-columns: 88px 1fr; }
.clipboard .body { grid-template-columns: 67px 1fr; }
.view .body { grid-template-columns: 78px; }

.large {
    flex-direction: column;
    justify-content: flex-start;
    padding-top: 5px;
    white-space: nowrap;
    justify-self: center;
}

.large svg {
    margin-bottom: 4px;
}

.large .caret {
    margin-top: 3px;
}

.column {
    padding-left: 7px;
}

.groups .column {
    padding-left: 0;
}

.utilities .column,
.clipboard .column {
    padding-left: 2px;
}

.tool {
    justify-content: flex-start;
    gap: 7px;
    height: 31px;
}

.tool .caret {
    margin-left: 3px;
}

.groups .tool {
    justify-content: center;
    width: 29px;
}

.tool.selected {
    border: 1px solid #7cc0f5;
    background-color: #44648a;
}

.combo {
    display: flex;
    align-items: center;
    height: 28px;
    padding-right: 1px;
    border: 1px solid #2b323e;
    background-color: #4d586b;
}

.combo select {
    flex: 1;
    min-width: 0;
    height: 26px;
    padding-left: 6px;
}

.combo .linetype {
    padding-left: 2px;
}

.swatch {
    width: 20px;
    height: 20px;
    border: 1px solid #d9d9d9;
    background-color: #ff8000;
}

.sample {
    width: 80px;
    margin-left: 8px;
    border-top: 1px solid #f2f3f5;
}

.layer-side {
    padding-right: 3px;
}

.layers .combo {
    gap: 6px;
    margin-top: 2px;
    padding-left: 7px;
}

.layers .combo select {
    padding-left: 0;
}

.layer-tools {
    display: grid;
    grid-template-columns: repeat(5, 30px);
}

.layer-tools button {
    justify-content: flex-start;
    height: 31px;
    padding-left: 4px;
}

.property-list {
    display: grid;
    grid-template-columns: 24px 1fr;
    align-items: center;
    gap: 2px 0;
    padding: 3px 3px 0 2px;
}

.properties .swatch {
    margin-left: 6px;
}

.launcher {
    position: absolute;
    right: 4px;
    width: 8px;
    height: 8px;
}

.view h2 {
    padding-right: 14px;
}

/* File and layout tabs */
.tabs {
    display: flex;
    align-items: center;
}

.files {
    flex: none;
    height: 38px;
    border-bottom: 5px solid #3b4453;
}

.menu {
    width: 52px;
    padding-left: 8px;
}

.tabs a {
    padding: 0 10px;
}

.tabs .active {
    display: flex;
    align-items: center;
    align-self: flex-end;
    gap: 9px;
    height: 30px;
    padding: 0 20px;
    background-color: #3b4453;
    clip-path: polygon(12px 0, 100% 0, calc(100% - 12px) 100%, 0 100%);
    color: #fff;
    font-weight: bold;
}

.add {
    width: 36px;
}

.slash {
    width: 1px;
    height: 22px;
    margin: 0 5px;
    background-color: #566070;
    transform: skewX(-22deg);
}

/* Drawing area */
.canvas {
    position: relative;
    flex: 1;
    min-height: 0;
    background-color: #212830;
}

.drawing {
    position: absolute;
    width: 100%;
    height: 100%;
}

.entity {
    fill: none;
    stroke: #f08208;
}

.ucs {
    fill: none;
    stroke: #e6e8eb;
}

.ucs text {
    fill: #e6e8eb;
    stroke: none;
    font-size: 22px;
    font-weight: 300;
}

.viewport-label {
    position: absolute;
    top: 6px;
    left: 4px;
}

.viewport-controls {
    position: absolute;
    top: 10px;
    right: 11px;
    display: flex;
    gap: 11px;
}

.viewcube {
    position: absolute;
    top: 73px;
    right: 18px;
    display: flex;
    flex-direction: column;
    align-items: center;
    gap: 15px;
}

.compass {
    fill: #94989c;
    font-size: 19px;
    font-weight: bold;
}

.face {
    fill: #3f4347;
    font-size: 10px;
    font-weight: bold;
}

.ucs-select {
    display: flex;
    align-items: center;
    width: 82px;
    height: 21px;
    padding: 0 5px;
    border: 1px solid #a4a6b0;
    border-radius: 4px;
    background-color: #8d8f9b;
    color: #c3c5cf;
    font-size: 12px;
    font-weight: 600;
}

.ucs-select select {
    flex: 1;
    min-width: 0;
}

.navbar {
    position: absolute;
    top: 259px;
    right: 2px;
    display: flex;
    flex-direction: column;
    align-items: center;
    width: 40px;
    height: 259px;
    padding: 2px;
    border-radius: 3px;
    background-color: #5a6065;
}

.navbar svg {
    fill: none;
    stroke: #454b50;
    stroke-width: 2px;
}

.navbar .corner {
    align-self: flex-end;
    stroke-width: 1px;
}

.navbar .solid {
    fill: #454b50;
}

.navbar button {
    width: 100%;
    height: 36px;
}

.navbar .wheel {
    margin-top: 6px;
}

.navbar .ruled {
    border-top: 1px solid #6a7075;
}

.navbar .caret {
    margin: 5px 0;
    border-top-color: #454b50;
}

.navbar .corner:last-child {
    margin-top: auto;
}

.command {
    position: absolute;
    right: 164px;
    bottom: 0;
    left: 163px;
    display: flex;
    height: 34px;
}

.command-grip {
    display: flex;
    align-items: center;
    gap: 9px;
    width: 72px;
    padding: 0 6px 0 4px;
    background-color: #282e3a;
}

.wrench {
    margin-left: auto;
}

.command-input {
    display: flex;
    flex: 1;
    align-items: center;
    padding: 0 5px;
    border-radius: 2px;
    background-color: #bcbdbf;
}

.command-input .caret {
    margin: 0 8px 0 2px;
    border-top-color: #444;
}

.command-input input {
    flex: 1;
    min-width: 0;
    height: 34px;
    color: #333;
    font-family: "DejaVu Sans Mono", monospace;
    font-size: 15px;
    font-style: italic;
}

.command-input input::placeholder {
    color: #606265;
    opacity: 1;
}

/* Layout tabs and status bar */
.bottom {
    display: flex;
    flex: none;
    justify-content: space-between;
    height: 41px;
    border-top: 5px solid #3b4453;
}

.layouts {
    height: 32px;
}

.layouts .active {
    align-self: flex-start;
}

.status {
    display: flex;
    gap: 3px;
    padding: 2px 2px 3px 0;
}

.space,
.set {
    display: flex;
    height: 31px;
    background-color: #3b4453;
}

.space {
    width: 59px;
}

.set button {
    width: 30px;
}

.set .on {
    background-color: #5f8dc0;
    color: #fff;
}

.set .drop {
    width: 20px;
}

.set .ruled {
    border-left: 1px solid #222933;
}

.set .scale {
    width: 42px;
    gap: 4px;
}

.set .graphics {
    width: 39px;
}
```
